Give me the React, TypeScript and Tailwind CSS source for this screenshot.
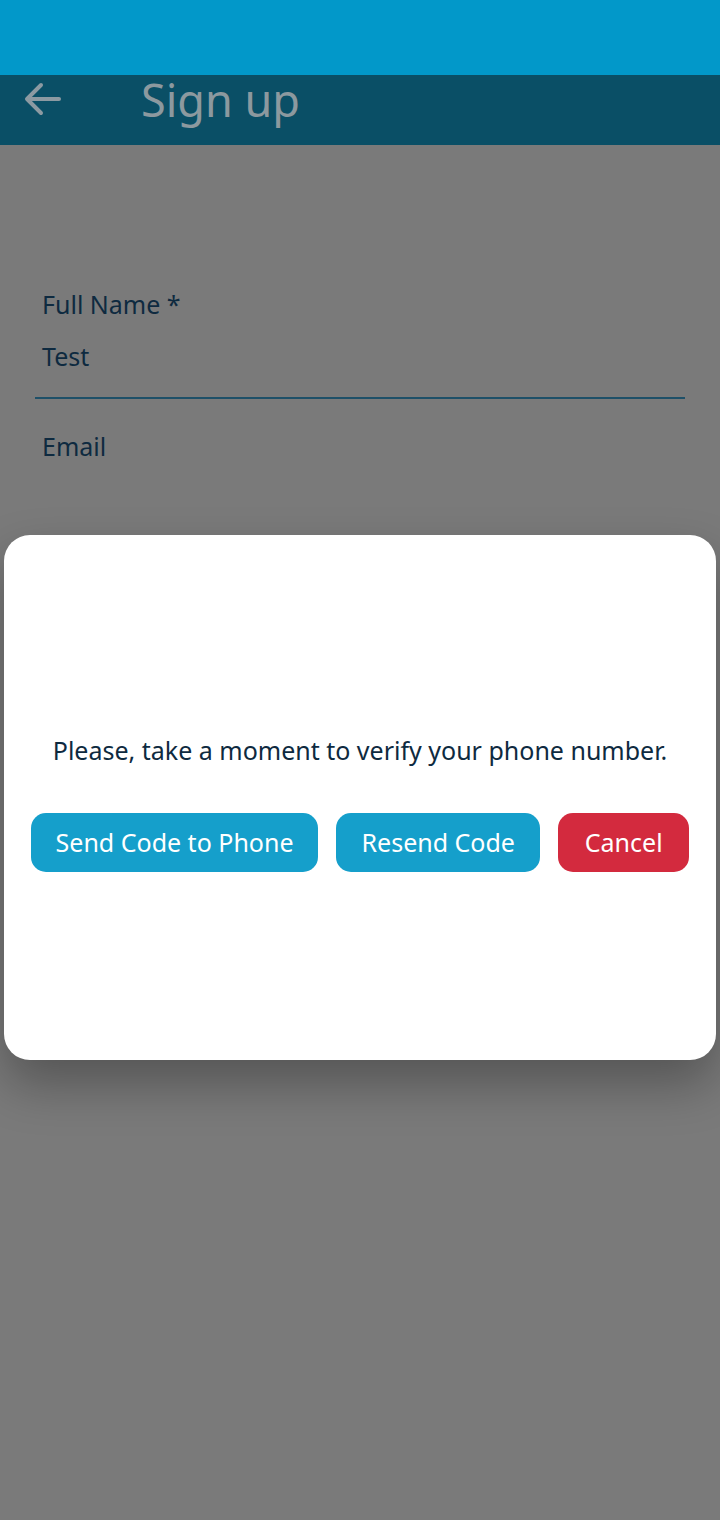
import React from "react";

export default function App() {
  const font = { fontFamily: '"Noto Sans", "Open Sans", sans-serif' };
  return (
    <div className="relative w-[720px] h-[1520px] bg-[#7a7a7a] overflow-hidden" style={font}>
      <div className="h-[75px] bg-[#0298c9]" />
      <div className="h-[70px] bg-[#0a4f66] flex items-start">
        <div className="w-[141px] pl-[24px] pt-[7px] flex items-center">
          <svg width="38" height="34" viewBox="0 0 38 34" fill="none" stroke="#8c9aa2" strokeWidth="4" strokeLinecap="round" strokeLinejoin="round">
            <path d="M35 17H4" />
            <path d="M17 3L3 17l14 14" />
          </svg>
        </div>
        <div className="pt-0 text-[45px] leading-[50px] text-[#8c999f]">Sign up</div>
      </div>
      <div className="px-[35px] pt-[142px]">
        <div className="pl-[7px] text-[25px] leading-[34px] text-[#0e2a40]">Full Name *</div>
        <div className="pl-[7px] mt-[18px] text-[25px] leading-[34px] text-[#0e2a40]">Test</div>
        <div className="mt-[24px] h-[2px] bg-[#1e5068]" />
        <div className="pl-[7px] mt-[30px] text-[25px] leading-[34px] text-[#0e2a40]">Email</div>
      </div>
      <div className="absolute left-[4px] top-[535px] w-[712px] h-[525px] bg-white rounded-[26px] shadow-[0_24px_50px_rgba(0,0,0,0.3)] flex flex-col items-center pt-[198px]">
        <div className="text-[25px] leading-[34px] text-[#0e2a40]">
          Please, take a moment to verify your phone number.
        </div>
        <div className="mt-[46px] flex gap-[18px] w-full px-[27px]">
          <button className="h-[59px] w-[288px] rounded-[15px] bg-[#159fcb] text-white text-[25px]">Send Code to Phone</button>
          <button className="h-[59px] w-[205px] rounded-[15px] bg-[#159fcb] text-white text-[25px]">Resend Code</button>
          <button className="h-[59px] w-[131px] rounded-[15px] bg-[#d32a3e] text-white text-[25px]">Cancel</button>
        </div>
      </div>
    </div>
  );
}
